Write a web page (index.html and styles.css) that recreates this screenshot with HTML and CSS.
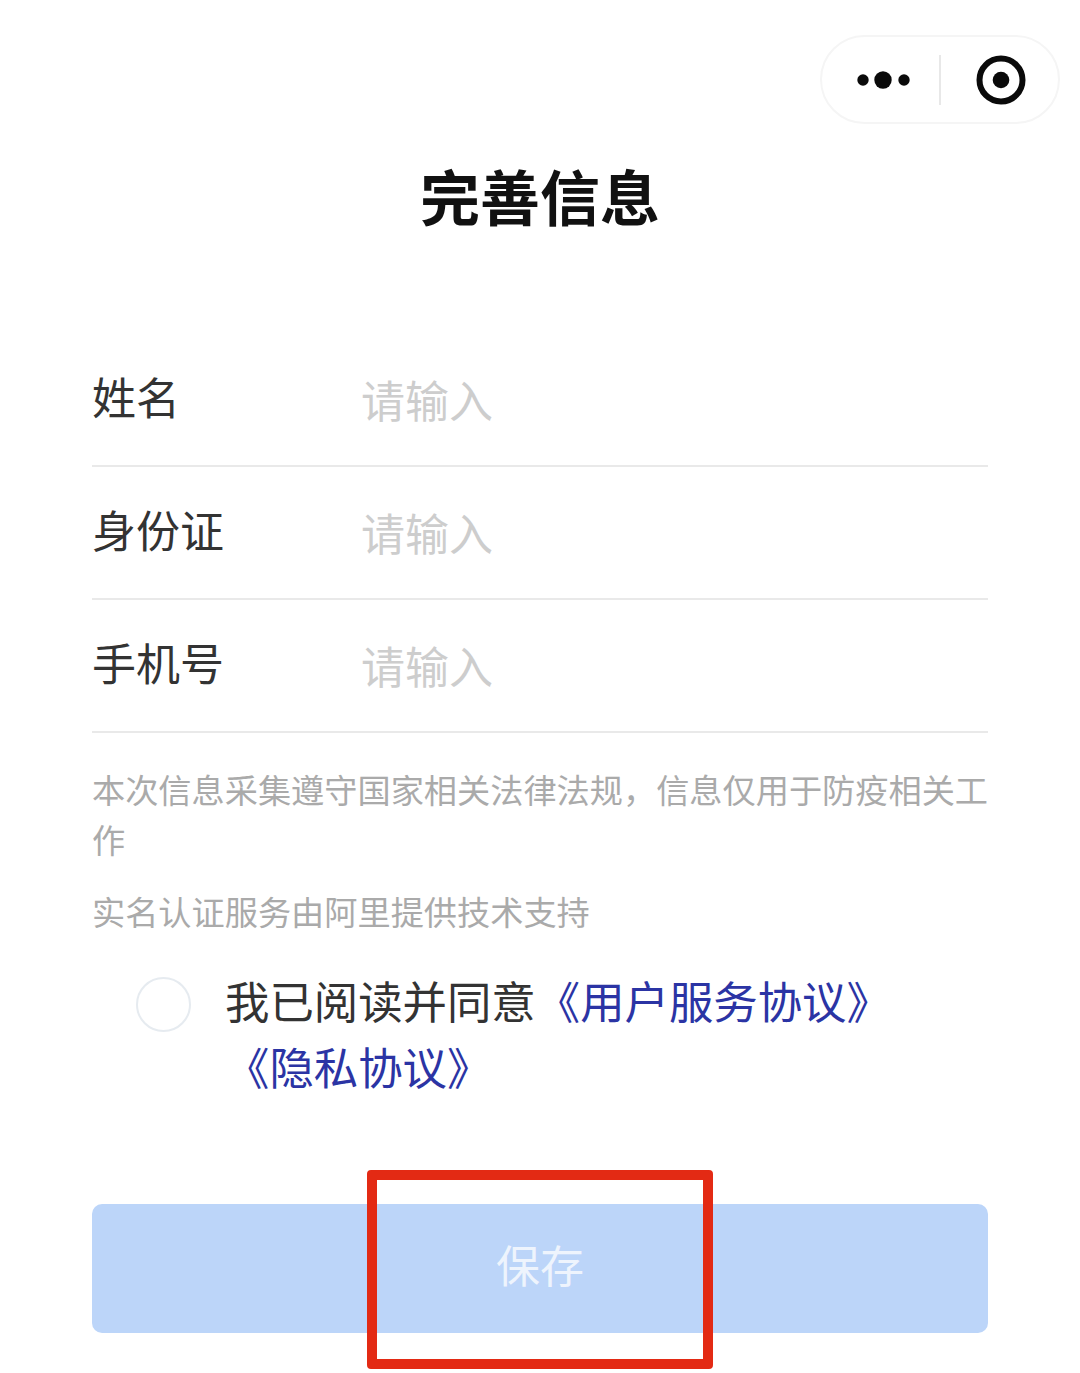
FILE: index.html
```html
<!DOCTYPE html>
<html lang="zh">
<head>
    <meta charset="UTF-8">
    <meta name="viewport" content="width=device-width, initial-scale=1.0">
    <title>完善信息</title>
    <link rel="stylesheet" href="styles.css">
</head>
<body>
    <div class="top-bar">
        <div class="capsule">
            <svg class="capsule-more" width="54" height="20" viewBox="0 0 54 20">
                <circle cx="7" cy="10" r="5.7"/>
                <circle cx="27" cy="10" r="8.7"/>
                <circle cx="48" cy="10" r="5.7"/>
            </svg>
            <span class="capsule-line"></span>
            <svg class="capsule-close" width="50" height="50" viewBox="0 0 50 50">
                <circle class="ring" cx="25" cy="25" r="21.5"/>
                <circle cx="25" cy="25" r="8.3"/>
            </svg>
        </div>
    </div>

    <h1>完善信息</h1>

    <div class="form">
        <div class="row">
            <label>姓名</label>
            <span class="placeholder">请输入</span>
        </div>
        <div class="row">
            <label>身份证</label>
            <span class="placeholder">请输入</span>
        </div>
        <div class="row">
            <label>手机号</label>
            <span class="placeholder">请输入</span>
        </div>

        <p class="note">本次信息采集遵守国家相关法律法规，信息仅用于防疫相关工作</p>
        <p class="note note-second">实名认证服务由阿里提供技术支持</p>

        <div class="agree">
            <span class="check"></span>
            <div class="agree-text">我已阅读并同意<a>《用户服务协议》</a><a>《隐私协议》</a></div>
        </div>

        <div class="save-wrap">
            <button class="save">保存</button>
            <div class="red-box"></div>
        </div>
    </div>
</body>
</html>
```

FILE: styles.css
```css
html, body {
    height: 100%;
}

body {
    margin: 0;
    overflow: hidden;
    background: white;
    color: #333;
    font-family: "Noto Sans CJK SC", "Noto Sans", sans-serif;
}

.top-bar {
    display: flex;
    justify-content: flex-end;
    padding: 35px 20px 0 0;
}

.capsule {
    box-sizing: border-box;
    width: 240px;
    height: 89px;
    display: flex;
    align-items: center;
    border: 2px solid #f5f5f5;
    border-radius: 45px;
}

.capsule-more {
    margin-left: 34px;
    fill: #0a0a0a;
}

.capsule-line {
    width: 2px;
    height: 50px;
    margin-left: 29px;
    background: #e8e8e8;
}

.capsule-close {
    margin-left: 35px;
    fill: #0a0a0a;
}

.capsule-close .ring {
    fill: none;
    stroke: #0a0a0a;
    stroke-width: 6;
}

h1 {
    margin: 33px 0 0;
    height: 76px;
    font-size: 60px;
    line-height: 76px;
    font-weight: 700;
    color: #111;
    text-align: center;
}

.form {
    margin: 101px 92px 0;
}

.row {
    box-sizing: border-box;
    height: 133px;
    display: flex;
    align-items: center;
    border-bottom: 2px solid #e9e9e9;
    font-size: 44px;
    line-height: 60px;
}

.row label {
    width: 269px;
    margin-top: -8px;
}

.placeholder {
    color: #cdcdcd;
    margin-top: -2px;
}

.note {
    margin: 31px -1px 0 0;
    font-size: 33.2px;
    line-height: 50px;
    color: #aaa;
}

.note-second {
    margin-top: 22px;
}

.agree {
    display: flex;
    margin-top: 31px;
    padding-left: 44px;
}

.check {
    box-sizing: border-box;
    flex: none;
    width: 55px;
    height: 55px;
    margin-top: 10px;
    border: 2px solid #e6ebf0;
    border-radius: 50%;
}

.agree-text {
    width: 680px;
    margin-left: 34px;
    font-size: 44.4px;
    line-height: 66px;
}

.agree-text a {
    color: #2b34a4;
}

.save-wrap {
    position: relative;
    margin-top: 105px;
}

.save {
    display: block;
    width: 100%;
    height: 129px;
    padding: 0 0 9px;
    border: none;
    border-radius: 10px;
    background: #bcd5f9;
    color: #eef4fd;
    font-family: inherit;
    font-size: 44px;
}

.red-box {
    position: absolute;
    box-sizing: border-box;
    left: 275px;
    top: -34px;
    width: 346px;
    height: 199px;
    border: 10px solid #e32a14;
    border-radius: 4px;
}
```
